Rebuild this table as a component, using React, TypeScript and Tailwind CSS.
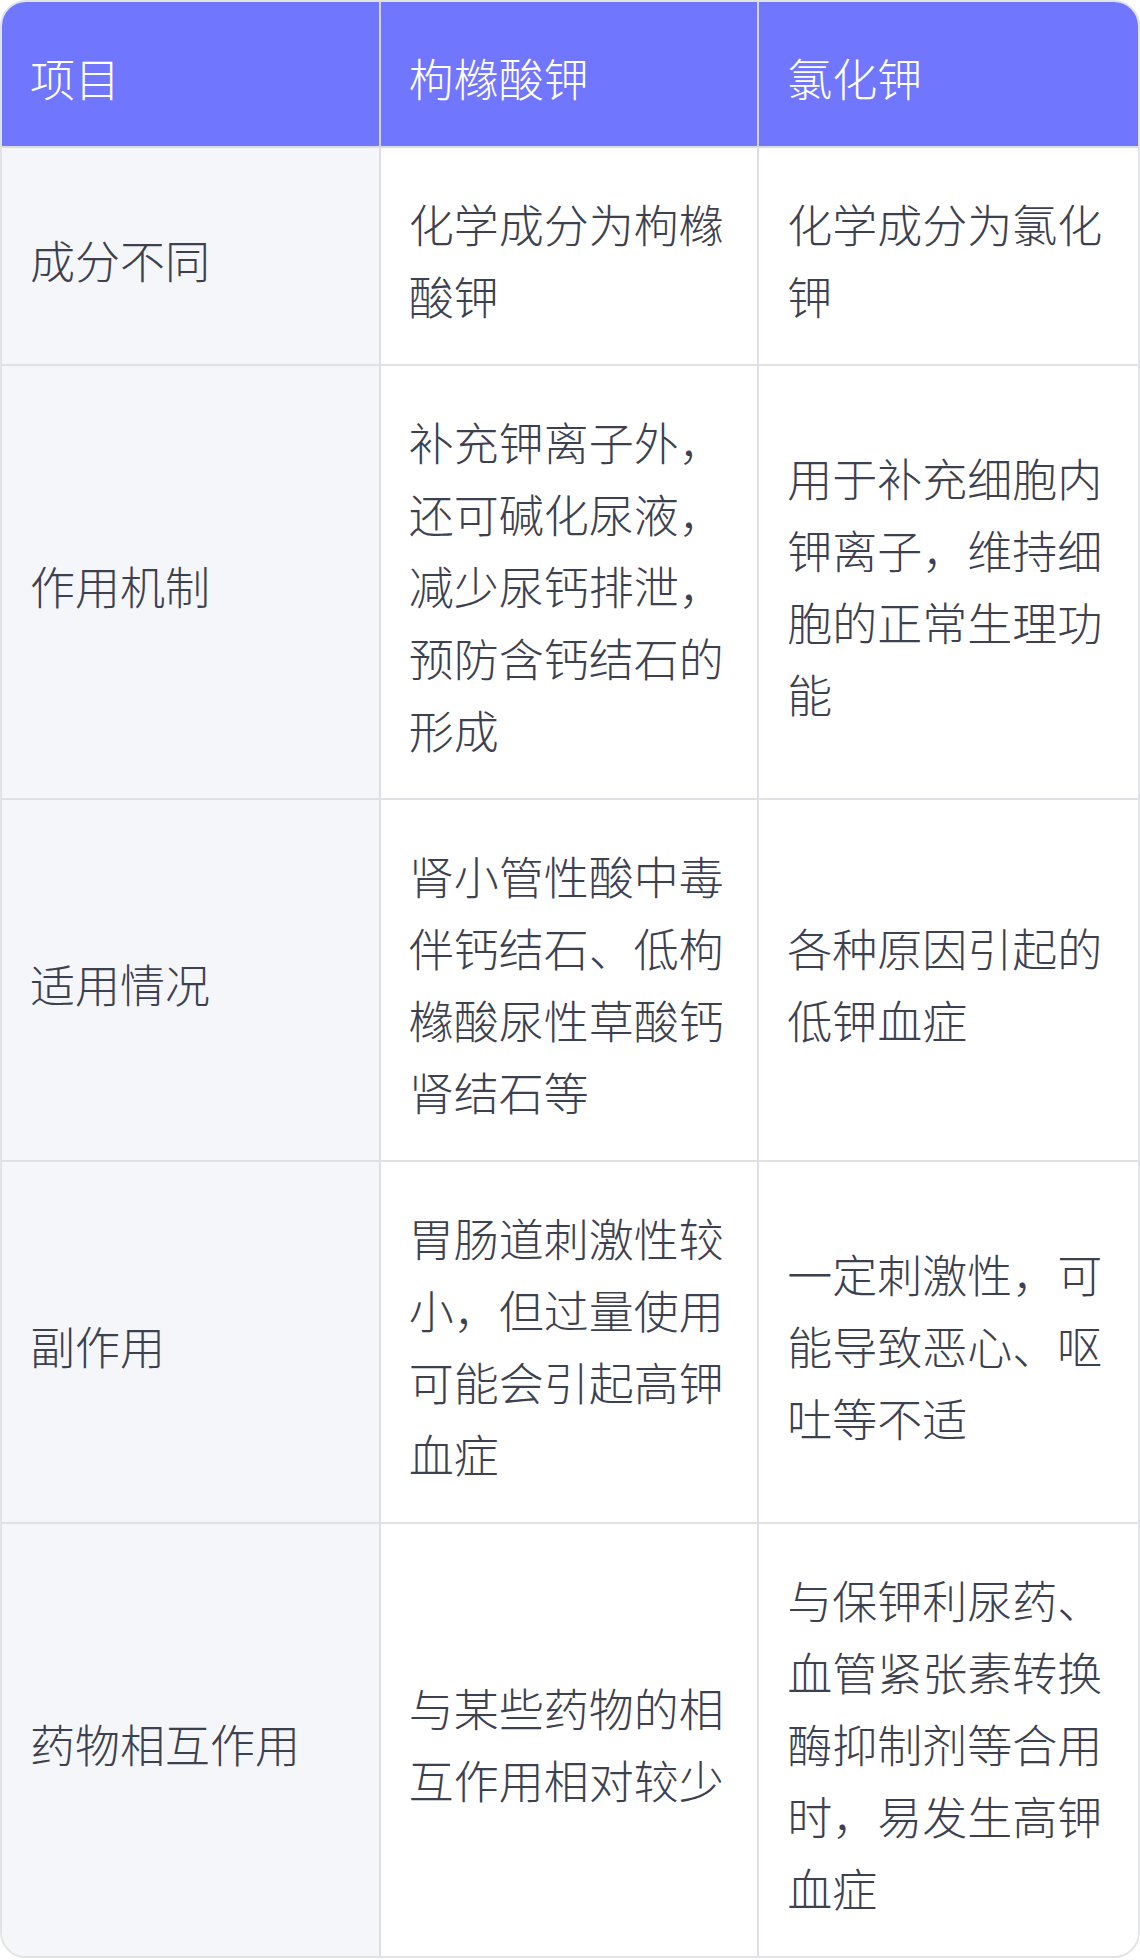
const rows: { item: string; a: string; b: string }[] = [
  { item: "成分不同", a: "化学成分为枸橼酸钾", b: "化学成分为氯化钾" },
  {
    item: "作用机制",
    a: "补充钾离子外，还可碱化尿液，减少尿钙排泄，预防含钙结石的形成",
    b: "用于补充细胞内钾离子，维持细胞的正常生理功能",
  },
  {
    item: "适用情况",
    a: "肾小管性酸中毒伴钙结石、低枸橼酸尿性草酸钙肾结石等",
    b: "各种原因引起的低钾血症",
  },
  {
    item: "副作用",
    a: "胃肠道刺激性较小，但过量使用可能会引起高钾血症",
    b: "一定刺激性，可能导致恶心、呕吐等不适",
  },
  {
    item: "药物相互作用",
    a: "与某些药物的相互作用相对较少",
    b: "与保钾利尿药、血管紧张素转换酶抑制剂等合用时，易发生高钾血症",
  },
];

export default function App() {
  return (
    <div className="min-h-screen bg-white font-['Noto_Sans_CJK_SC','Noto_Sans',sans-serif] font-light">
      <div className="overflow-hidden rounded-[26px] border-2 border-[#e2e3e7]">
        <table className="w-full table-fixed border-separate border-spacing-0 text-[45px] leading-[72px]">
          <thead>
            <tr className="bg-[#7176ff] text-white">
              <th className="border-b-2 border-r-2 border-b-[#dcdde3] border-r-[#d4d6f0] px-[28px] pb-[32px] pt-[40px] text-left font-light">
                项目
              </th>
              <th className="border-b-2 border-r-2 border-b-[#dcdde3] border-r-[#d4d6f0] px-[28px] pb-[32px] pt-[40px] text-left font-light">
                枸橼酸钾
              </th>
              <th className="border-b-2 border-b-[#dcdde3] px-[28px] pb-[32px] pt-[40px] text-left font-light">
                氯化钾
              </th>
            </tr>
          </thead>
          <tbody className="text-[#3d414f]">
            {rows.map((r, i) => {
              const last = i === rows.length - 1;
              const rowBorder = last ? "" : "border-b-2 border-b-[#e0e1e5]";
              return (
                <tr key={r.item}>
                  <td className={`${rowBorder} border-r-2 border-r-[#dedfe4] bg-[#f4f6fa] px-[28px] pb-[32px] pt-[40px] align-middle`}>
                    {r.item}
                  </td>
                  <td className={`${rowBorder} border-r-2 border-r-[#dedfe4] bg-white px-[28px] pb-[32px] pt-[40px] align-middle`}>
                    {r.a}
                  </td>
                  <td className={`${rowBorder} bg-white px-[28px] pb-[32px] pt-[40px] align-middle`}>{r.b}</td>
                </tr>
              );
            })}
          </tbody>
        </table>
      </div>
    </div>
  );
}
